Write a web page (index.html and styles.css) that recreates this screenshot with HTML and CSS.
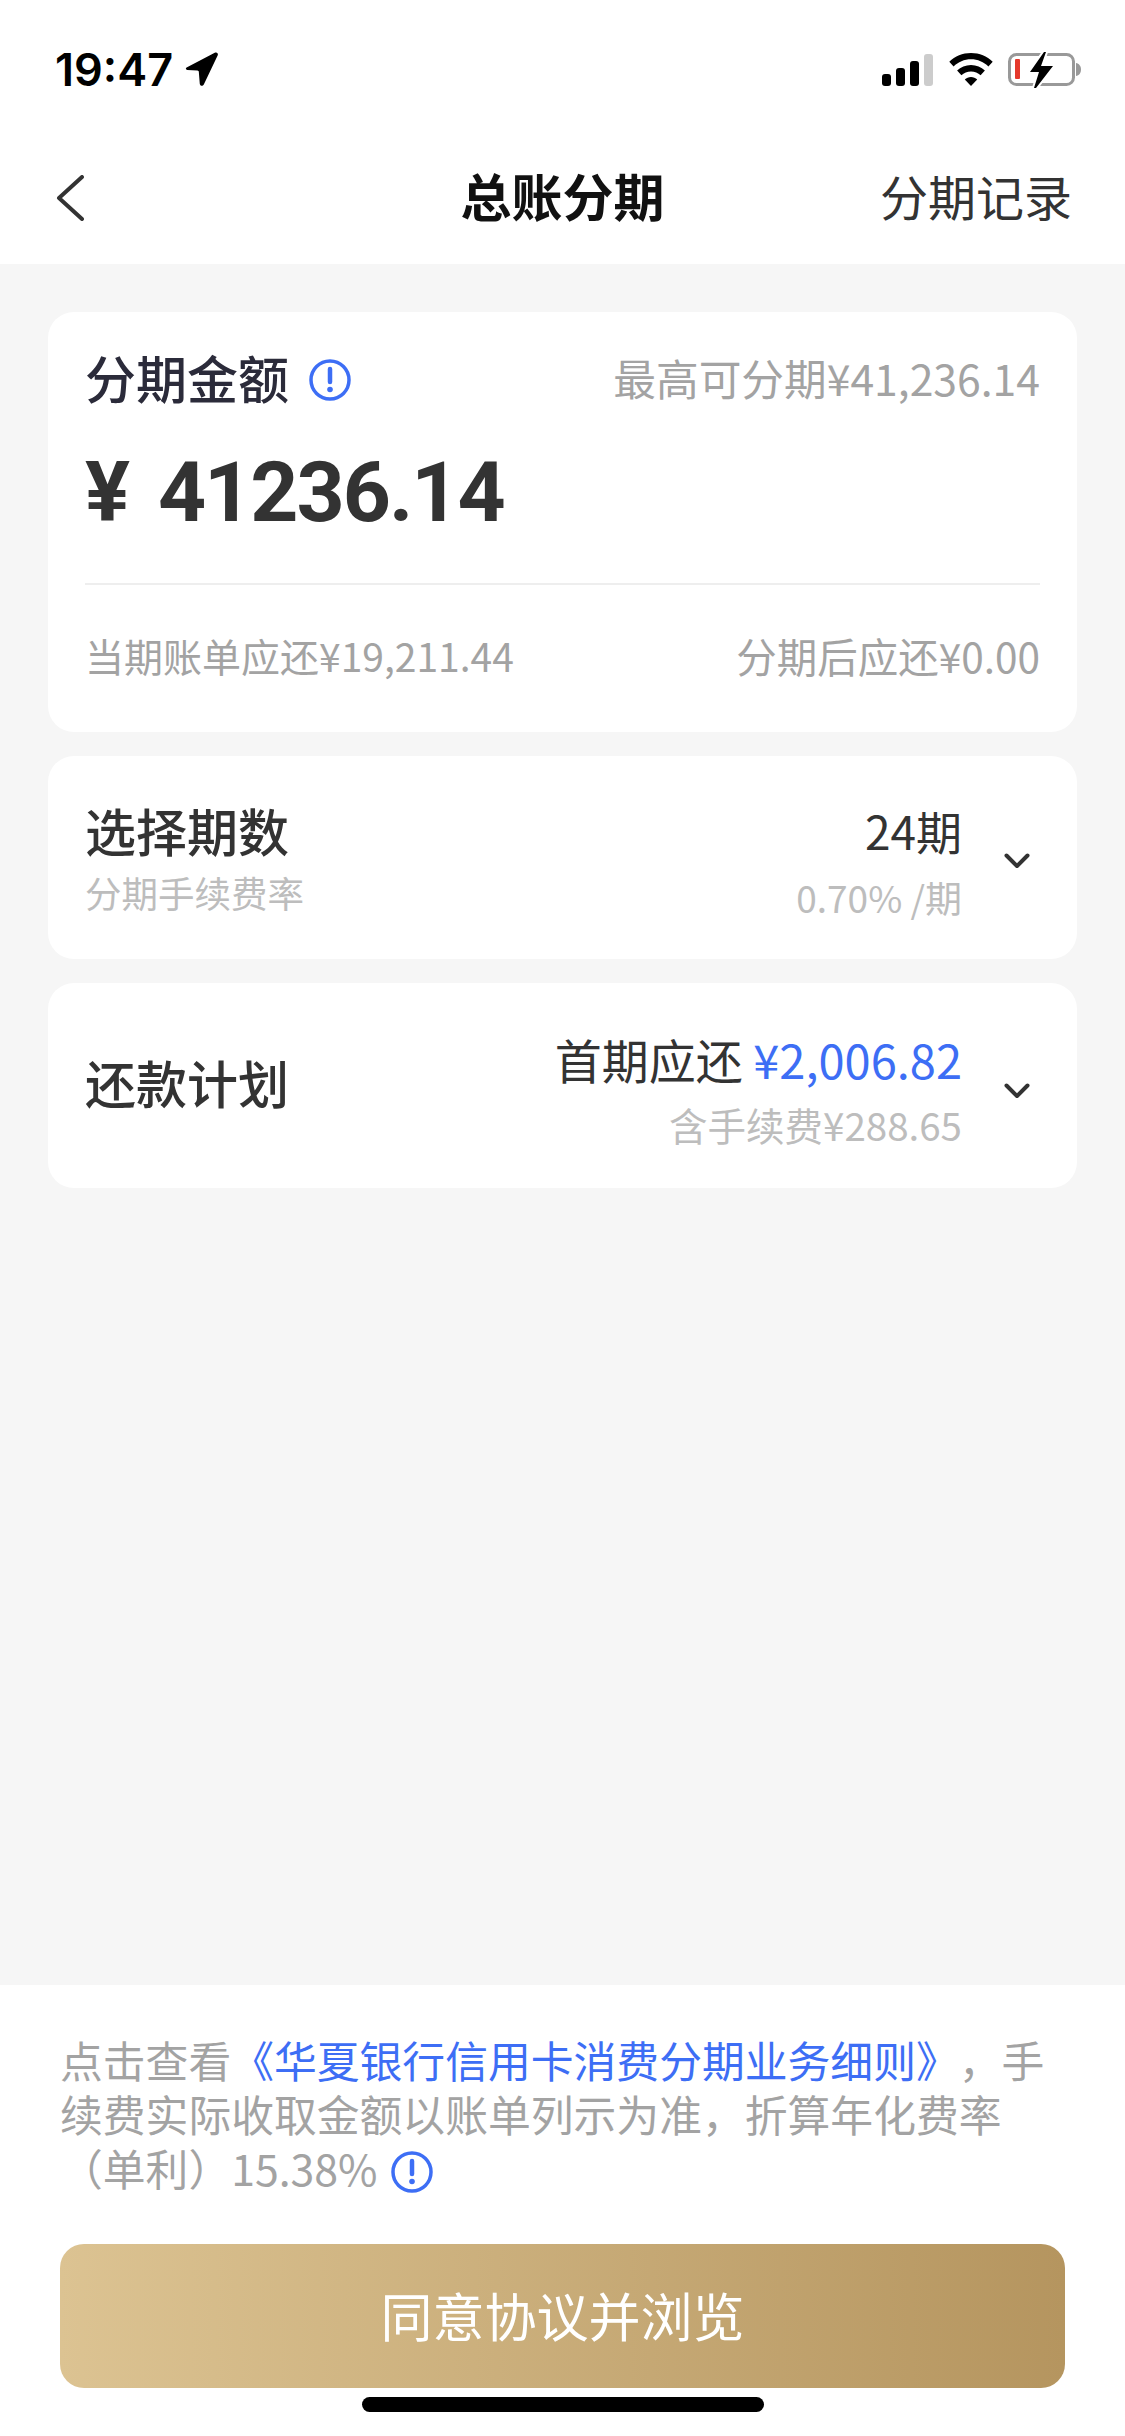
FILE: index.html
```html
<!DOCTYPE html>
<html lang="zh-CN">
<head>
    <meta charset="UTF-8">
    <meta name="viewport" content="width=device-width, initial-scale=1.0">
    <title>总账分期</title>
    <link rel="stylesheet" href="styles.css">
</head>
<body>
    <div class="page">
        <div class="status-bar">
            <div class="status-time">
                <span>19:47</span>
                <svg class="icon-location" viewBox="2 1 31 32"><path d="M3 15.5 29.5 1.8c2-1 3.6.6 2.7 2.6L19.2 31.5c-1 2-3.6 1.600-3.800-.6l-.9-11.2c0-.9-.5-1.300-1.300-1.400L3.600 17.900c-1.400-.2-1.700-1.700-.6-2.400z"/></svg>
            </div>
            <div class="status-icons">
                <div class="signal">
                    <span class="bar bar-1"></span>
                    <span class="bar bar-2"></span>
                    <span class="bar bar-3"></span>
                    <span class="bar bar-4"></span>
                </div>
                <svg class="icon-wifi" viewBox="0 0 44 33"><path d="M22 0C13.500 0 6 3.300.3 8.700l4.300 4.700C9.200 9 15.300 6.300 22 6.300S34.800 9 39.400 13.400l4.300-4.700C38 3.300 30.500 0 22 0z"/><path d="M22 12c-5.400 0-10.300 2.100-13.900 5.500l4.300 4.700c2.500-2.300 5.900-3.800 9.600-3.800s7.100 1.500 9.600 3.800l4.300-4.700C32.300 14.100 27.400 12 22 12z"/><path d="M22 24c-2.400 0-4.600.9-6.200 2.500L22 33l6.200-6.500C26.600 24.900 24.400 24 22 24z"/></svg>
                <svg class="icon-battery" viewBox="0 0 73 36">
                    <rect x="1.500" y="2.500" width="64" height="30" rx="7" fill="none" stroke="#999" stroke-width="3"/>
                    <rect x="7" y="7" width="5" height="20" rx="1" fill="#e5392c"/>
                    <path d="M68 11c3 .5 5 3 5 6.500S71 23.500 68 24z" fill="#999"/>
                    <path d="M22 20 36 0h2L33 14h12L28 36h-2l5-16z" fill="#fff" stroke="#fff" stroke-width="4"/>
                    <path d="M22 20 36 0h2L33 14h12L28 36h-2l5-16z"/>
                </svg>
            </div>
        </div>

        <header class="nav">
            <svg class="icon-back" viewBox="0 0 28 46"><path d="M26 2 3 23l23 21" fill="none" stroke="#333" stroke-width="4" stroke-linecap="round" stroke-linejoin="round"/></svg>
            <h1 class="nav-title">总账分期</h1>
            <a class="nav-link">分期记录</a>
        </header>

        <main class="content">
            <section class="card card-amount">
                <div class="amount-head">
                    <div class="amount-label">
                        <span class="amount-name">分期金额</span>
                        <svg class="icon-info" viewBox="0 0 42 42"><circle cx="21" cy="21" r="19" fill="none" stroke="#3d6ef5" stroke-width="3.500"/><path d="M21 10v13" stroke="#3d6ef5" stroke-width="4.500" stroke-linecap="round"/><circle cx="21" cy="30.500" r="2.800" fill="#3d6ef5"/></svg>
                    </div>
                    <span class="hint hint-max">最高可分期¥41,236.14</span>
                </div>
                <div class="amount-value">¥ 41236.14</div>
                <div class="divider"></div>
                <div class="amount-foot">
                    <span class="hint">当期账单应还¥19,211.44</span>
                    <span class="hint hint-after">分期后应还¥0.00</span>
                </div>
            </section>

            <section class="card row-card row-periods">
                <div class="row-title">
                    <div class="row-name">选择期数</div>
                    <div class="row-note">分期手续费率</div>
                </div>
                <div class="row-value">
                    <div class="row-main">24期</div>
                    <div class="row-sub">0.70% /期</div>
                </div>
                <svg class="icon-chevron" viewBox="0 0 26 16"><path d="M2.500 2.500 13 13 23.500 2.500" fill="none" stroke="#333" stroke-width="4" stroke-linecap="round" stroke-linejoin="round"/></svg>
            </section>

            <section class="card row-card row-plan">
                <div class="row-title">
                    <div class="row-name">还款计划</div>
                </div>
                <div class="row-value">
                    <div class="row-main">首期应还 <span class="blue">¥2,006.82</span></div>
                    <div class="row-sub">含手续费¥288.65</div>
                </div>
                <svg class="icon-chevron" viewBox="0 0 26 16"><path d="M2.500 2.500 13 13 23.500 2.500" fill="none" stroke="#333" stroke-width="4" stroke-linecap="round" stroke-linejoin="round"/></svg>
            </section>
        </main>

        <footer class="bottom">
            <p class="terms">点击查看<span class="blue">《华夏银行信用卡消费分期业务细则》</span>，手<br>续费实际收取金额以账单列示为准，折算年化费率<br>（单利）15.38% <svg class="icon-info icon-inline" viewBox="0 0 42 42"><circle cx="21" cy="21" r="19" fill="none" stroke="#3d6ef5" stroke-width="3.500"/><path d="M21 10v13" stroke="#3d6ef5" stroke-width="4.500" stroke-linecap="round"/><circle cx="21" cy="30.500" r="2.800" fill="#3d6ef5"/></svg></p>
            <button class="btn-agree">同意协议并浏览</button>
            <div class="home-indicator"></div>
        </footer>
    </div>
</body>
</html>
```

FILE: styles.css
```css
:root {
    --blue: #3d6ef5;
    --text: #333;
    --grey: #a3a3a3;
    --light-grey: #bdbdbd;
}
* {
    box-sizing: border-box;
}
body {
    margin: 0;
    font-family: "Noto Sans CJK SC", "Noto Sans", sans-serif;
    color: var(--text);
    background-color: #f6f6f6;
    text-spacing-trim: space-all;
}
.page {
    width: 1125px;
    height: 2436px;
    display: flex;
    flex-direction: column;
    overflow: hidden;
}
.blue {
    color: var(--blue);
}

/* status bar */
.status-bar {
    height: 132px;
    padding: 52px 44px 0 55px;
    display: flex;
    justify-content: space-between;
    align-items: flex-start;
    background-color: #fff;
}
.status-time {
    display: flex;
    align-items: center;
    gap: 12px;
    height: 34px;
    font-family: Inter, sans-serif;
    font-size: 45px;
    font-weight: 600;
    color: #000;
}
.icon-location {
    width: 34px;
    height: 34px;
}
.status-icons {
    display: flex;
    align-items: flex-end;
    height: 34px;
}
.signal {
    display: flex;
    align-items: flex-end;
    gap: 5px;
    height: 33px;
}
.bar {
    width: 9px;
    background-color: #000;
    border-radius: 3px;
}
.bar-1 { height: 12px; }
.bar-2 { height: 18px; }
.bar-3 { height: 25px; }
.bar-4 { height: 32px; background-color: #ccc; }
.icon-wifi {
    width: 44px;
    height: 33px;
    margin-left: 16px;
}
.icon-battery {
    width: 73px;
    height: 36px;
    margin-left: 15px;
    margin-bottom: -2px;
}

/* nav */
.nav {
    height: 132px;
    padding: 0 53px;
    display: grid;
    grid-template-columns: 1fr auto 1fr;
    align-items: center;
    background-color: #fff;
}
.icon-back {
    width: 28px;
    height: 46px;
    margin-left: 3px;
}
.nav-title {
    margin: 0 0 6px;
    font-size: 51px;
    font-weight: 700;
    line-height: 60px;
    color: #111;
}
.nav-link {
    justify-self: end;
    margin-bottom: 6px;
    font-size: 48px;
    line-height: 60px;
}

/* cards */
.content {
    flex: 1;
    padding: 48px 48px 0;
    display: flex;
    flex-direction: column;
    gap: 24px;
}
.card {
    background-color: #fff;
    border-radius: 26px;
}
.card-amount {
    height: 420px;
    padding: 44px 37px 0;
}
.amount-head,
.amount-foot {
    display: flex;
    justify-content: space-between;
    align-items: center;
    height: 48px;
}
.amount-label {
    display: flex;
    align-items: center;
    gap: 20px;
}
.amount-name {
    margin-bottom: 6px;
    font-size: 51px;
    font-weight: 500;
    color: #2b2b3a;
}
.icon-info {
    width: 42px;
    height: 42px;
}
.hint {
    margin-bottom: 6px;
    font-size: 39px;
    color: var(--grey);
}
.hint-max {
    font-size: 42.7px;
}
.hint-after {
    font-size: 40.5px;
}
.amount-value {
    margin-top: 39px;
    font-family: Roboto, sans-serif;
    font-size: 84px;
    font-weight: 700;
    line-height: 100px;
    letter-spacing: -2px;
    word-spacing: 11px;
}
.divider {
    height: 2px;
    margin-top: 40px;
    background-color: #eee;
}
.amount-foot {
    margin-top: 49px;
}
.row-card {
    display: flex;
    align-items: flex-start;
    padding-left: 37px;
    padding-right: 47px;
}
.row-periods {
    height: 203px;
    padding-top: 44px;
}
.row-plan {
    height: 205px;
    padding-top: 46px;
}
.row-plan .row-title {
    margin-top: 23px;
}
.row-title {
    flex: 1;
}
.row-name {
    font-size: 51px;
    font-weight: 500;
    line-height: 60px;
}
.row-note {
    margin-top: 11px;
    font-size: 36.5px;
    line-height: 44px;
    color: var(--light-grey);
}
.row-value {
    text-align: right;
}
.row-main {
    font-size: 46px;
    line-height: 60px;
}
.row-plan .row-main {
    font-size: 47px;
}
.row-sub {
    margin-top: 15px;
    font-size: 37px;
    line-height: 44px;
    color: var(--light-grey);
}
.row-plan .row-sub {
    margin-top: 13px;
    font-size: 38.5px;
}
.icon-chevron {
    width: 26px;
    height: 16px;
    margin: 53px 0 0 42px;
}
.row-plan .icon-chevron {
    margin-top: 54px;
}

/* bottom */
.bottom {
    height: 451px;
    padding: 47px 60px 0;
    background-color: #fff;
}
.terms {
    margin: 0;
    font-size: 42.8px;
    line-height: 54px;
    color: var(--grey);
}
.icon-inline {
    vertical-align: middle;
    margin: -4px 0 0 4px;
}
.btn-agree {
    display: block;
    width: 100%;
    height: 144px;
    margin-top: 50px;
    padding: 0 0 4px;
    border: 0;
    border-radius: 24px;
    background: linear-gradient(90deg, #dcc392, #b5955f);
    color: #fff;
    font-family: inherit;
    font-size: 52px;
}
.home-indicator {
    width: 402px;
    height: 15px;
    margin: 9px auto 0;
    border-radius: 8px;
    background-color: #000;
}
```
